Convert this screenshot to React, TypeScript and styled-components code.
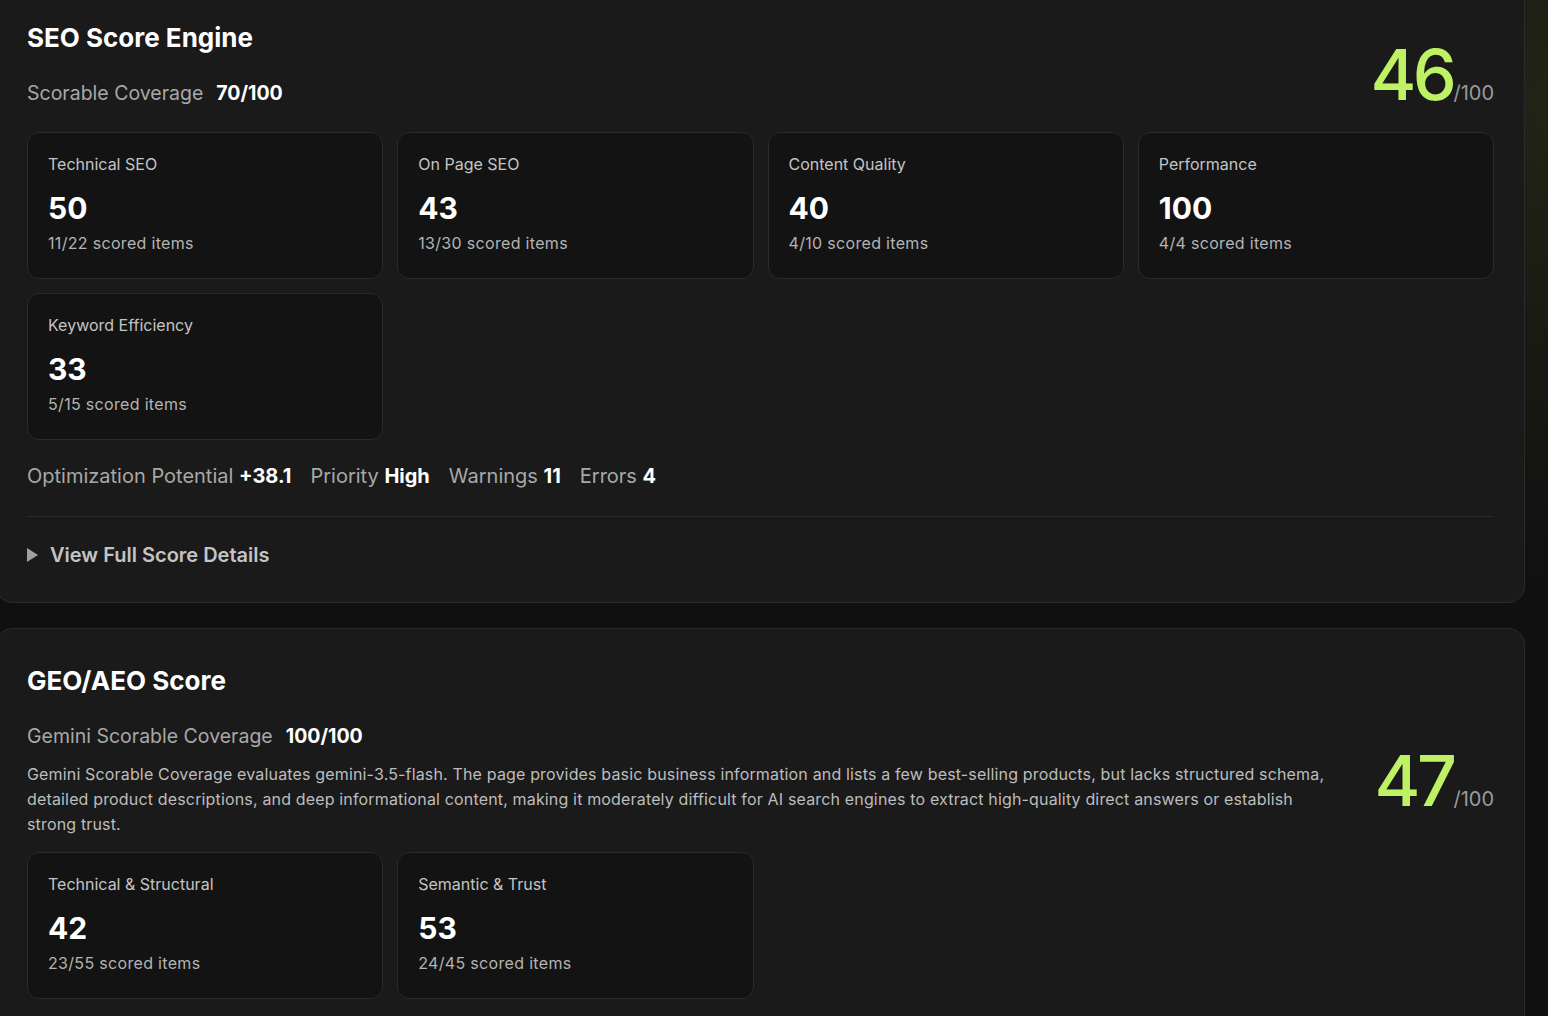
import styled, { createGlobalStyle } from "styled-components";

const GlobalStyle = createGlobalStyle`
  html, body {
    margin: 0;
    padding: 0;
    background: #101010;
    overflow: hidden;
  }
  body {
    font-family: Inter, "Noto Sans", sans-serif;
    color: #fff;
    -webkit-font-smoothing: antialiased;
  }
`;

const colors = {
  panel: "#1a1a1a",
  card: "#131313",
  border: "#2a2a2a",
  muted: "#a8a8a8",
  soft: "#c4c4c4",
  lime: "#bef264",
};

const Page = styled.div`
  width: 1548px;
  height: 1016px;
  overflow: hidden;
  background:
    radial-gradient(ellipse 420px 700px at 100% 10%, rgba(150, 190, 60, 0.12), transparent 70%),
    #101010;
`;

const Stack = styled.div`
  display: flex;
  flex-direction: column;
  gap: 25px;
  width: 1529px;
  margin: -15px 0 0 -4px;
`;

const Panel = styled.section`
  background: ${colors.panel};
  border: 1px solid ${colors.border};
  border-radius: 16px;
  padding: 36px 30px 35px 30px;
`;

const Header = styled.div`
  display: flex;
  justify-content: space-between;
  align-items: last baseline;
`;

const HeadText = styled.div`
  display: flex;
  flex-direction: column;
  gap: 27px;
`;

const Title = styled.h2`
  margin: 0;
  font-size: 26px;
  line-height: 32px;
  font-weight: 700;
  color: #fff;
`;

const Coverage = styled.div`
  font-size: 19.5px;
  line-height: 24px;
  color: ${colors.muted};
  display: flex;
  gap: 13px;
`;

const Strong = styled.b`
  font-weight: 700;
  color: #fff;
`;

const Score = styled.div`
  display: flex;
  align-items: baseline;
  flex-shrink: 0;
`;

const ScoreValue = styled.span`
  font-size: 70px;
  line-height: 1;
  font-weight: 500;
  letter-spacing: -0.05em;
  color: ${colors.lime};
`;

const ScoreMax = styled.span`
  font-size: 20px;
  color: #9a9a9a;
`;

const Cards = styled.div<{ $top: number }>`
  display: grid;
  grid-template-columns: repeat(4, 1fr);
  gap: 14px;
  margin-top: ${({ $top }) => $top}px;
`;

const Card = styled.div`
  background: ${colors.card};
  border: 1px solid ${colors.border};
  border-radius: 12px;
  padding: 21px 20px 24px 20px;
`;

const CardLabel = styled.div`
  font-size: 16px;
  line-height: 20px;
  color: ${colors.soft};
`;

const CardValue = styled.div`
  margin-top: 16px;
  font-size: 30px;
  line-height: 36px;
  font-weight: 700;
  color: #fff;
`;

const CardMeta = styled.div`
  margin-top: 6px;
  font-size: 16px;
  line-height: 22px;
  letter-spacing: 0.02em;
  color: #b4b4b4;
`;

const Stats = styled.div`
  display: flex;
  gap: 19px;
  margin-top: 24px;
  font-size: 20px;
  line-height: 24px;
  color: ${colors.muted};
`;

const Divider = styled.hr`
  border: 0;
  border-top: 1px solid ${colors.border};
  margin: 28px 0 0 0;
`;

const Details = styled.button`
  display: flex;
  align-items: center;
  gap: 12px;
  margin-top: 26px;
  padding: 0;
  background: none;
  border: 0;
  font-family: inherit;
  font-size: 20px;
  line-height: 24px;
  font-weight: 600;
  color: ${colors.soft};
  cursor: pointer;
`;

const Caret = styled.span`
  width: 0;
  height: 0;
  border-top: 7px solid transparent;
  border-bottom: 7px solid transparent;
  border-left: 11px solid #a0a0a0;
`;

const Row = styled.div`
  display: flex;
  align-items: center;
  gap: 40px;
  margin-top: 27px;
`;

const RowText = styled.div`
  flex: 1;
  display: flex;
  flex-direction: column;
  gap: 14px;
`;

const Description = styled.p`
  margin: 0;
  font-size: 16px;
  line-height: 25px;
  letter-spacing: 0.01em;
  color: #bdbdbd;
`;

type Metric = { label: string; value: number; scored: string };

const seoMetrics: Metric[] = [
  { label: "Technical SEO", value: 50, scored: "11/22" },
  { label: "On Page SEO", value: 43, scored: "13/30" },
  { label: "Content Quality", value: 40, scored: "4/10" },
  { label: "Performance", value: 100, scored: "4/4" },
  { label: "Keyword Efficiency", value: 33, scored: "5/15" },
];

const geoMetrics: Metric[] = [
  { label: "Technical & Structural", value: 42, scored: "23/55" },
  { label: "Semantic & Trust", value: 53, scored: "24/45" },
];

const stats = [
  { label: "Optimization Potential", value: "+38.1" },
  { label: "Priority", value: "High" },
  { label: "Warnings", value: "11" },
  { label: "Errors", value: "4" },
];

function MetricCard({ metric }: { metric: Metric }) {
  return (
    <Card>
      <CardLabel>{metric.label}</CardLabel>
      <CardValue>{metric.value}</CardValue>
      <CardMeta>{metric.scored} scored items</CardMeta>
    </Card>
  );
}

function ScoreBadge({ value }: { value: number }) {
  return (
    <Score>
      <ScoreValue>{value}</ScoreValue>
      <ScoreMax>/100</ScoreMax>
    </Score>
  );
}

export default function App() {
  return (
    <Page>
      <GlobalStyle />
      <Stack>
        <Panel>
          <Header>
            <HeadText>
              <Title>SEO Score Engine</Title>
              <Coverage>
                Scorable Coverage <Strong>70/100</Strong>
              </Coverage>
            </HeadText>
            <ScoreBadge value={46} />
          </Header>
          <Cards $top={22}>
            {seoMetrics.map((m) => (
              <MetricCard key={m.label} metric={m} />
            ))}
          </Cards>
          <Stats>
            {stats.map((s) => (
              <span key={s.label}>
                {s.label} <Strong>{s.value}</Strong>
              </span>
            ))}
          </Stats>
          <Divider />
          <Details>
            <Caret />
            View Full Score Details
          </Details>
        </Panel>

        <Panel>
          <Title>GEO/AEO Score</Title>
          <Row>
            <RowText>
              <Coverage>
                Gemini Scorable Coverage <Strong>100/100</Strong>
              </Coverage>
              <Description>
                Gemini Scorable Coverage evaluates gemini-3.5-flash. The page provides basic business
                information and lists a few best-selling products, but lacks structured schema,
                detailed product descriptions, and deep informational content, making it moderately
                difficult for AI search engines to extract high-quality direct answers or establish
                strong trust.
              </Description>
            </RowText>
            <ScoreBadge value={47} />
          </Row>
          <Cards $top={15}>
            {geoMetrics.map((m) => (
              <MetricCard key={m.label} metric={m} />
            ))}
          </Cards>
        </Panel>
      </Stack>
    </Page>
  );
}
